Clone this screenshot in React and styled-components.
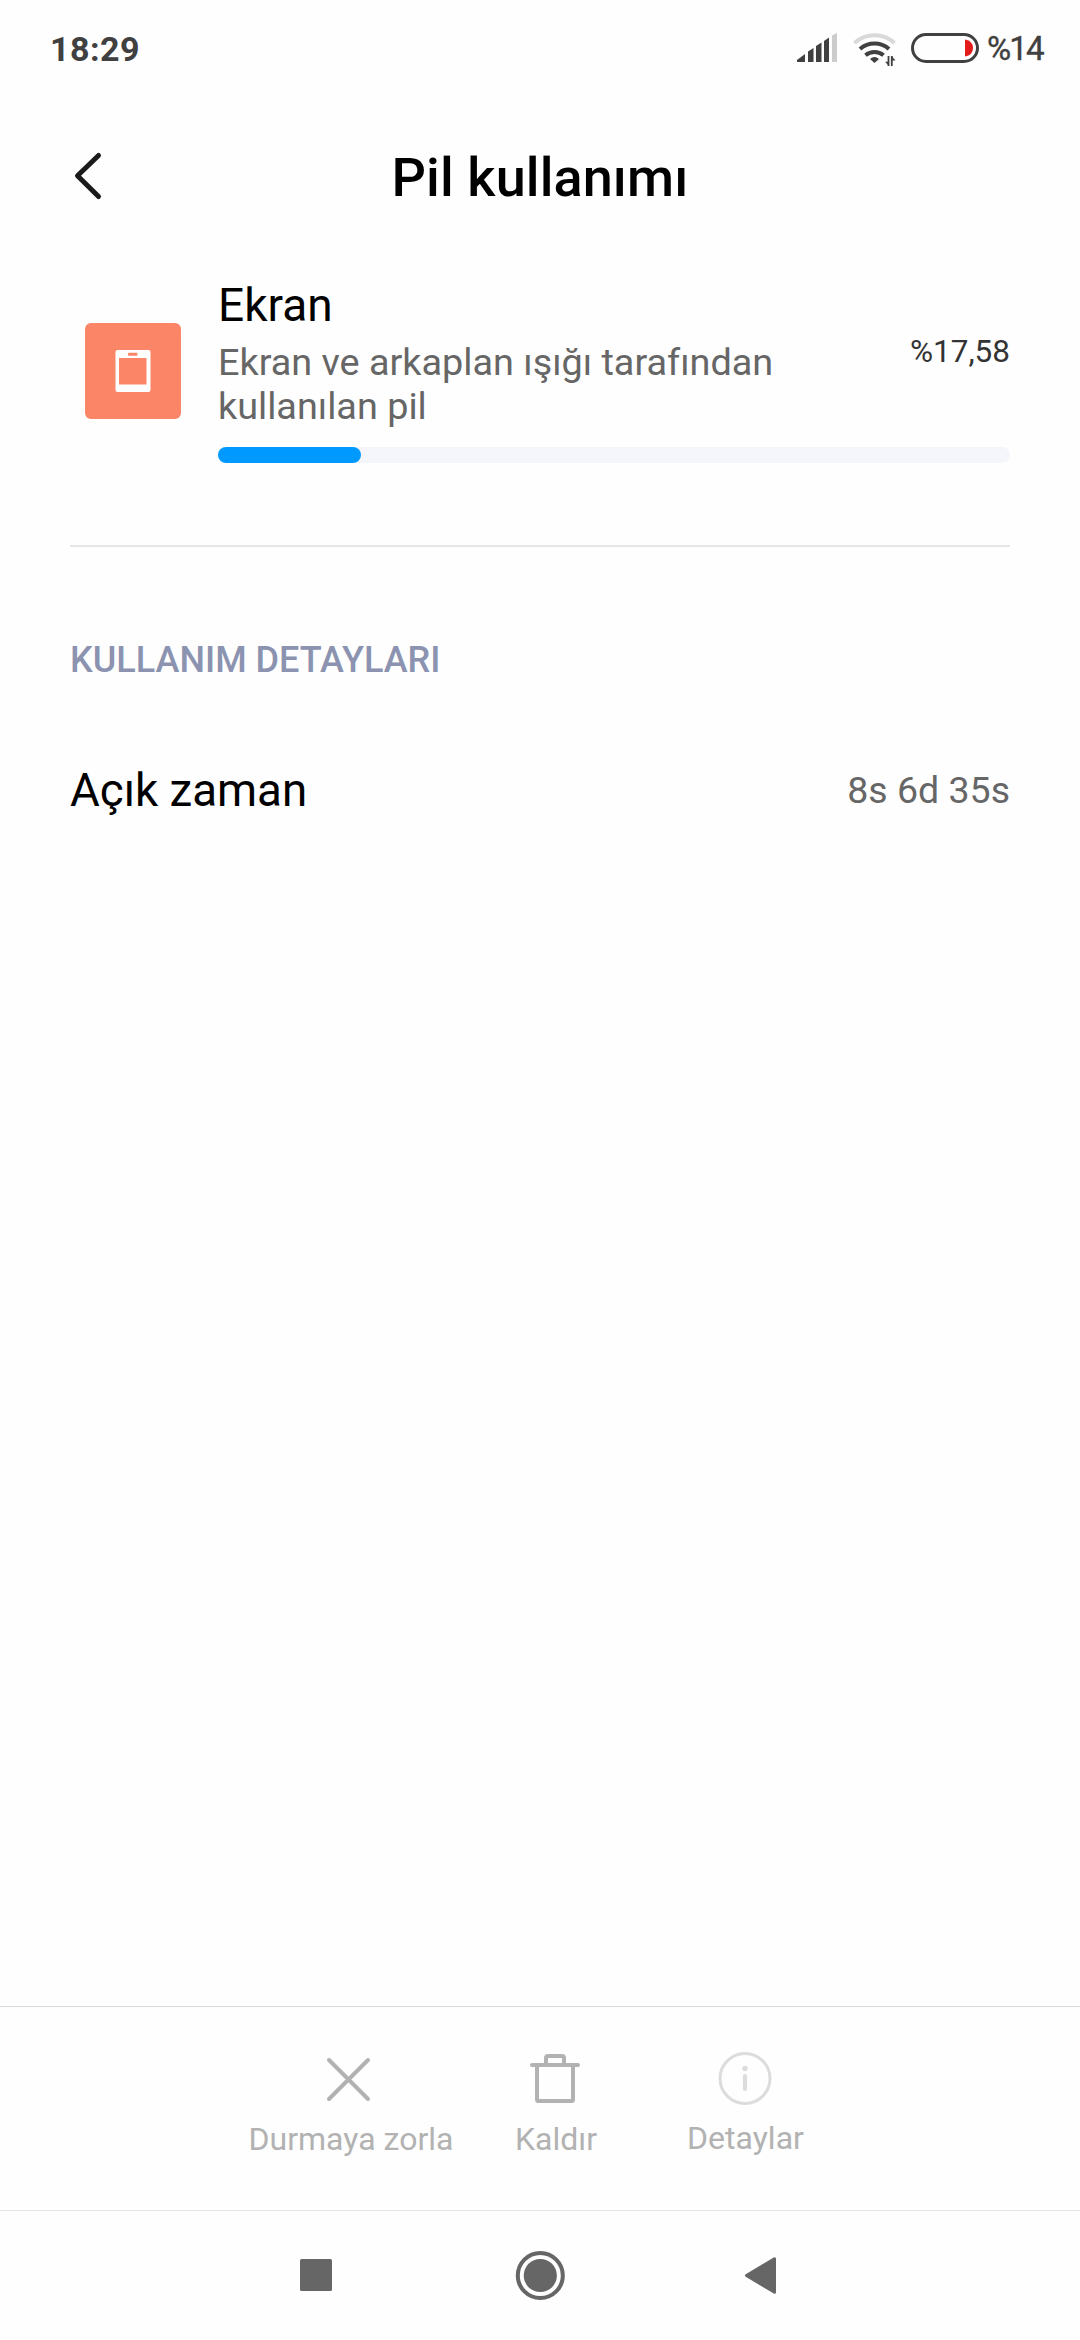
import React from 'react'
import styled, { createGlobalStyle } from 'styled-components'

const App = () => {
  return (
    <>
      <GlobalStyle />
      <Screen>
        <StatusBar>
          <Clock>18:29</Clock>
          <StatusIcons>
            <SignalIcon />
            <WifiIcon />
            <BatteryIcon />
            <BatteryText>%14</BatteryText>
          </StatusIcons>
        </StatusBar>

        <Header>
          <BackButton aria-label="Geri">
            <svg width="40" height="60" viewBox="0 0 40 60" fill="none">
              <path d="M30.500 7.500L9.500 27.700L30.500 48.500" stroke="#1a1a1a" strokeWidth="5" strokeLinecap="round" strokeLinejoin="round" />
            </svg>
          </BackButton>
          <Title>Pil kullanımı</Title>
        </Header>

        <Content>
          <UsageItem>
            <ScreenIcon />
            <UsageBody>
              <UsageInfo>
                <div>
                  <UsageName>Ekran</UsageName>
                  <UsageText>Ekran ve arkaplan ışığı tarafından kullanılan pil</UsageText>
                </div>
                <UsagePercent>%17,58</UsagePercent>
              </UsageInfo>
              <Track>
                <Fill $percent={18.05} />
              </Track>
            </UsageBody>
          </UsageItem>
          <Divider />
          <SectionTitle>KULLANIM DETAYLARI</SectionTitle>
          <DetailRow>
            <DetailLabel>Açık zaman</DetailLabel>
            <DetailValue>8s 6d 35s</DetailValue>
          </DetailRow>
        </Content>

        <ActionBar>
          <Action $width={206}>
            <svg width="60" height="60" viewBox="0 0 60 60" fill="none" stroke="#b2b2b2" strokeWidth="4" strokeLinecap="round">
              <path d="M10 11L49 50M49 11L10 50" />
            </svg>
            <ActionLabel $shift={2}>Durmaya zorla</ActionLabel>
          </Action>
          <Action $width={206}>
            <svg width="60" height="60" viewBox="0 0 60 60" fill="none" stroke="#b2b2b2" strokeWidth="4" strokeLinecap="round" strokeLinejoin="round">
              <path d="M7 16H53M12 16V50.500Q12 52 13.500 52H46.500Q48 52 48 50.500V16M21 16V9Q21 7 23 7H37Q39 7 39 9V16" />
            </svg>
            <ActionLabel $shift={1}>Kaldır</ActionLabel>
          </Action>
          <Action $width={173}>
            <svg width="60" height="60" viewBox="0 0 60 60" fill="none" stroke="#dcdcdc">
              <circle cx="30" cy="29.500" r="25" strokeWidth="3" />
              <circle cx="30" cy="19.500" r="2.700" fill="#dcdcdc" stroke="none" />
              <path d="M30 27V40" strokeWidth="4.200" strokeLinecap="round" />
            </svg>
            <ActionLabel $shift={1} $gap={10}>Detaylar</ActionLabel>
          </Action>
        </ActionBar>

        <NavBar>
          <svg width="60" height="60" viewBox="0 0 60 60">
            <rect x="14" y="14" width="32" height="32" rx="1.500" fill="#666" />
          </svg>
          <svg width="60" height="60" viewBox="0 0 60 60">
            <circle cx="30.300" cy="30.500" r="22.500" fill="none" stroke="#666" strokeWidth="4" />
            <circle cx="30.300" cy="30.500" r="16.600" fill="#666" />
          </svg>
          <svg width="60" height="60" viewBox="0 0 60 60">
            <path d="M12.500 30.500L40.500 13.800V47.200Z" fill="#666" stroke="#666" strokeWidth="3" strokeLinejoin="round" />
          </svg>
        </NavBar>
      </Screen>
    </>
  )
}

const SignalIcon = () => (
  <svg width="42" height="40" viewBox="0 0 42 40" fill="#404040">
    <path d="M0 33V31L8 25V33Z" />
    <path d="M11 33V22.500L16.500 19V33Z" />
    <path d="M19 33V17L24.500 13.500V33Z" />
    <path d="M27 33V12L32 8.500V33Z" />
    <path d="M35 33V6.500L40 4V33Z" fill="#cccccc" />
  </svg>
)

const WifiIcon = () => (
  <svg width="44" height="40" viewBox="0 0 44 40" fill="none" stroke="#404040" strokeWidth="4">
    <path d="M1.500 14A30 30 0 0 1 41.500 14" stroke="#d9d9d9" />
    <path d="M7 20A22 22 0 0 1 36 20" />
    <path d="M12.500 26.300A14 14 0 0 1 30.500 26.300" />
    <path d="M17 30Q21.500 26 26 30L21.500 34Z" fill="#404040" stroke="none" />
    <path d="M35.500 27V37M38.800 27V37" strokeWidth="1.800" />
    <path d="M32 32.800H36V37ZM42.500 31.500H38.500V27Z" fill="#404040" stroke="none" />
  </svg>
)

const BatteryIcon = () => (
  <svg width="68" height="40" viewBox="0 0 68 40">
    <rect x="1.500" y="5.500" width="65" height="27" rx="13.500" fill="none" stroke="#404040" strokeWidth="3" />
    <path d="M54 10.500Q62 12 62 19T54 27.500Z" fill="#e41a1a" />
  </svg>
)

const ScreenIcon = () => (
  <IconBox>
    <svg width="36" height="42" viewBox="0 0 36 42">
      <rect x="0.500" width="35" height="42" rx="2" fill="#fff" />
      <rect x="4" y="8" width="27.500" height="26.500" fill="#fa8567" />
      <rect x="13" y="2.700" width="9.500" height="3" rx="1" fill="#fa8567" />
    </svg>
  </IconBox>
)

const GlobalStyle = createGlobalStyle`
    * {
      box-sizing: border-box;
    }
    body {
      margin: 0;
      background-color: #fefefe;
      font-family: Roboto, 'Noto Sans', sans-serif;
    }
`
const Screen = styled.div`
    width: 1080px;
    height: 2340px;
    display: flex;
    flex-direction: column;
    background-color: #fefefe;
`
const StatusBar = styled.div`
    height: 98px;
    padding: 0 37px 0 50px;
    display: flex;
    justify-content: space-between;
    align-items: center;
    color: #404040;
`
const Clock = styled.span`
    font-size: 34px;
    font-weight: 700;
    line-height: 40px;
    letter-spacing: 0.5px;
`
const StatusIcons = styled.div`
    display: flex;
    align-items: center;

    svg {
      margin-right: 14px;
    }
    svg:nth-of-type(3) {
      margin-right: 8px;
    }
`
const BatteryText = styled.span`
    width: 56px;
    font-size: 33px;
    font-weight: 400;
    -webkit-text-stroke: 0.4px #404040;
    line-height: 38px;
    letter-spacing: -1.8px;
    white-space: nowrap;
`
const Header = styled.header`
    height: 160px;
    padding: 0 68px;
    display: grid;
    grid-template-columns: 1fr auto 1fr;
    align-items: center;
`
const BackButton = styled.button`
    width: 40px;
    height: 60px;
    padding: 0;
    border: none;
    background: none;
`
const Title = styled.h1`
    margin: 0;
    font-size: 54px;
    font-weight: 500;
    line-height: 64px;
    letter-spacing: 0.1px;
    color: #000;
`
const Content = styled.main`
    flex: 1;
    padding: 19px 70px 0;
`
const UsageItem = styled.section`
    display: flex;
    align-items: flex-start;
`
const IconBox = styled.div`
    width: 96px;
    height: 96px;
    margin: 46px 37px 0 15px;
    display: flex;
    justify-content: center;
    align-items: center;
    border-radius: 6px;
    background-color: #fa8567;
`
const UsageBody = styled.div`
    flex: 1;
`
const UsageInfo = styled.div`
    display: flex;
    justify-content: space-between;
    align-items: center;
`
const UsageName = styled.h2`
    margin: 0 0 7px;
    font-size: 46px;
    font-weight: 400;
    line-height: 56px;
    color: #000;
`
const UsageText = styled.p`
    width: 600px;
    margin: 0;
    font-size: 37.800px;
    line-height: 44px;
    color: #666;
`
const UsagePercent = styled.span`
    margin-bottom: 2px;
    font-size: 31.500px;
    line-height: 38px;
    color: #333;
`
const Track = styled.div`
    height: 16px;
    margin-top: 19px;
    border-radius: 8px;
    background-color: #f4f6fb;
`
const Fill = styled.div`
    width: ${({ $percent }) => $percent}%;
    height: 100%;
    border-radius: 8px;
    background-color: #0099ff;
`
const Divider = styled.div`
    height: 2px;
    margin-top: 82px;
    background-color: #e6e6e6;
`
const SectionTitle = styled.h3`
    margin: 92px 0 0;
    font-size: 36px;
    font-weight: 500;
    line-height: 42px;
    color: #8c93b0;
`
const DetailRow = styled.div`
    height: 60px;
    margin-top: 79px;
    display: flex;
    justify-content: space-between;
    align-items: center;
`
const DetailLabel = styled.span`
    font-size: 45.700px;
    color: #000;
`
const DetailValue = styled.span`
    font-size: 37.500px;
    color: #666;
`
const ActionBar = styled.footer`
    height: 204px;
    padding: 42px 0 0 246px;
    display: flex;
    border-top: 1px solid #d9d9d9;
`
const Action = styled.div`
    width: ${({ $width }) => $width}px;
    display: flex;
    flex-direction: column;
    align-items: center;
`
const ActionLabel = styled.span`
    margin-top: ${({ $gap = 11 }) => $gap}px;
    padding-left: ${({ $shift }) => $shift * 2}px;
    font-size: 32px;
    line-height: 38px;
    white-space: nowrap;
    color: #b2b2b2;
`
const NavBar = styled.nav`
    height: 130px;
    padding: 34px 204px 0;
    display: grid;
    grid-template-columns: repeat(3, 1fr);
    justify-items: center;
    border-top: 1px solid #e6e6e6;
`
export default App
